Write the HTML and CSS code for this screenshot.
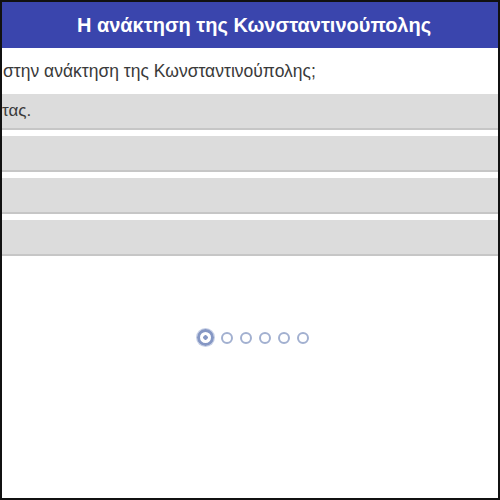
FILE: index.html
```html
<!DOCTYPE html>
<html lang="el">
<head>
<meta charset="utf-8">
<link rel="stylesheet" href="styles.css">
</head>
<body>
<div class="frame">
  <header class="header">Η ανάκτηση της Κωνσταντινούπολης</header>
  <div class="question">στην ανάκτηση της Κωνσταντινούπολης;</div>
  <div class="options">
    <div class="option">τας.</div>
    <div class="option"></div>
    <div class="option"></div>
    <div class="option"></div>
  </div>
  <div class="pager">
    <span class="dot active"></span>
    <span class="dot"></span>
    <span class="dot"></span>
    <span class="dot"></span>
    <span class="dot"></span>
    <span class="dot"></span>
  </div>
</div>
</body>
</html>
```
FILE: styles.css
```css
html, body {
  margin: 0;
  padding: 0;
  background: #fff;
}
.frame {
  width: 500px;
  height: 500px;
  box-sizing: border-box;
  border: 2px solid #111;
  overflow: hidden;
  display: flex;
  flex-direction: column;
  font-family: "Liberation Sans", Arial, sans-serif;
}
.header {
  height: 46px;
  background: #3a45ad;
  color: #fff;
  font-weight: bold;
  font-size: 20px;
  display: flex;
  align-items: center;
  justify-content: center;
  padding-left: 8px;
}
.question {
  height: 46px;
  padding-left: 1px;
  display: flex;
  align-items: center;
  color: #3a3a3a;
  font-size: 17.5px;
  white-space: nowrap;
}
.options {
  display: flex;
  flex-direction: column;
  gap: 6px;
}
.option {
  height: 34px;
  background: #dcdcdc;
  border-bottom: 2px solid #c6c6c6;
  display: flex;
  align-items: center;
  color: #3a3a3a;
  font-size: 17px;
  padding-left: 0;
}
.pager {
  display: flex;
  justify-content: center;
  align-items: center;
  gap: 7px;
  margin-top: 73px;
  padding-left: 6px;
}
.dot {
  width: 8px;
  height: 8px;
  border: 2px solid #a2b0d0;
  border-radius: 50%;
}
.dot.active {
  width: 11px;
  height: 11px;
  border: 3px solid #8597c4;
  background: radial-gradient(circle, #8597c4 0 2px, #fff 2.5px);
  box-shadow: 0 0 0 1px #c7d0e6;
}
```
